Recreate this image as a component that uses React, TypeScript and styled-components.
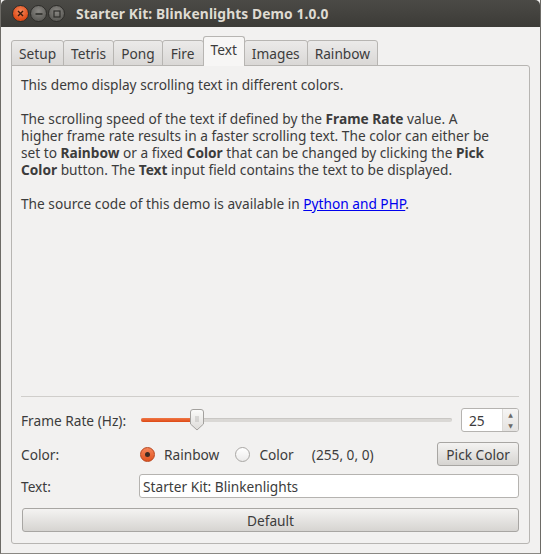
import React, { useState } from "react";
import styled, { createGlobalStyle } from "styled-components";

const GlobalStyle = createGlobalStyle`
  html, body {
    margin: 0;
    padding: 0;
    background: #f2f1f0;
  }
  body {
    font-family: "Noto Sans", "DejaVu Sans", sans-serif;
    font-size: 13.7px;
    color: #3c3c3c;
  }
`;

const Window = styled.div`
  width: 541px;
  height: 554px;
  display: flex;
  flex-direction: column;
  background: #f2f1f0;
  box-sizing: border-box;
  border-left: 1px solid #6d6b66;
  border-right: 1px solid #6d6b66;
  border-bottom: 1px solid #8a8883;
  overflow: hidden;
`;

const TitleBar = styled.div`
  height: 27px;
  flex: none;
  display: flex;
  align-items: center;
  padding-left: 11px;
  background: linear-gradient(#4b4a46, #3c3b37);
  border-radius: 5px 5px 0 0;
`;

const WinButton = styled.div<{ $kind: "close" | "min" | "max" }>`
  width: 17px;
  height: 17px;
  border-radius: 50%;
  margin-right: 1px;
  display: flex;
  align-items: center;
  justify-content: center;
  box-sizing: border-box;
  border: 1px solid #2e2d2a;
  background: ${({ $kind }) =>
    $kind === "close"
      ? "radial-gradient(circle at 50% 35%, #f58a5e, #df4a16 70%)"
      : "radial-gradient(circle at 50% 35%, #8a8884, #5f5e5a 70%)"};
`;

const Title = styled.div`
  margin-left: 10px;
  font-weight: bold;
  font-size: 13.8px;
  color: #dfdbd2;
  letter-spacing: 0.1px;
`;

const Body = styled.div`
  flex: 1;
  display: flex;
  flex-direction: column;
  padding: 10px 10px 9px 10px;
  min-height: 0;
`;

const TabBar = styled.div`
  display: flex;
  align-items: flex-end;
  height: 29px;
  position: relative;
  z-index: 1;
  margin-bottom: -1px;
`;

const Tab = styled.div<{ $active?: boolean }>`
  box-sizing: border-box;
  min-width: 42px;
  height: ${({ $active }) => ($active ? "30px" : "26px")};
  padding: 0 7px;
  display: flex;
  align-items: center;
  justify-content: center;
  color: #3c3c3c;
  border: 1px solid #b7b5b2;
  border-bottom: ${({ $active }) => ($active ? "none" : "1px solid #b7b5b2")};
  border-radius: 3px 3px 0 0;
  margin-right: -1px;
  background: ${({ $active }) =>
    $active ? "#f7f6f5" : "linear-gradient(#ebeae9, #dad8d6)"};
  padding-bottom: ${({ $active }) => ($active ? "4px" : "0")};
`;

const Pane = styled.div`
  flex: 1;
  display: flex;
  flex-direction: column;
  border: 1px solid #b7b5b2;
  border-radius: 0 3px 3px 3px;
  background: #f2f1f0;
  padding: 10px 10px 11px 9px;
  min-height: 0;
`;

const Description = styled.div`
  flex: 1;
  line-height: 17px;
  p {
    margin: 0 0 17px 0;
  }
  b {
    font-weight: bold;
  }
  a {
    color: #0000ee;
    text-decoration: underline;
  }
`;

const Separator = styled.div`
  height: 1px;
  background: #d0cecb;
  margin-bottom: 11px;
`;

const Row = styled.div<{ $gap: number }>`
  display: flex;
  align-items: center;
  margin-bottom: ${({ $gap }) => $gap}px;
`;

const Label = styled.div`
  width: 118px;
  flex: none;
`;

const SliderWrap = styled.div`
  flex: 1;
  height: 24px;
  position: relative;
  margin: 0 9px 0 2px;
  display: flex;
  align-items: center;
`;

const Track = styled.div`
  height: 4px;
  width: 100%;
  border-radius: 2px;
  background: #dad8d5;
  box-shadow: inset 0 1px 0 #c9c7c4;
`;

const Fill = styled.div`
  position: absolute;
  left: 0;
  top: 10px;
  height: 4px;
  border-radius: 2px;
  background: linear-gradient(#f07746, #dd4814);
`;

const Handle = styled.svg`
  position: absolute;
  top: 1px;
`;

const SpinBox = styled.div`
  width: 58px;
  height: 24px;
  box-sizing: border-box;
  border: 1px solid #b5b3b0;
  border-radius: 3px;
  background: #fff;
  display: flex;
  flex: none;
`;

const SpinValue = styled.div`
  flex: 1;
  padding-left: 7px;
  display: flex;
  align-items: center;
`;

const SpinArrows = styled.div`
  width: 15px;
  border-left: 1px solid #dddbd8;
  background: linear-gradient(#f6f5f4, #e4e2e0);
  display: flex;
  flex-direction: column;
  align-items: center;
  justify-content: space-around;
  font-size: 6px;
  color: #6a6966;
  border-radius: 0 2px 2px 0;
`;

const Radio = styled.div<{ $checked?: boolean }>`
  width: 15px;
  height: 15px;
  border-radius: 50%;
  box-sizing: border-box;
  display: flex;
  align-items: center;
  justify-content: center;
  border: 1px solid ${({ $checked }) => ($checked ? "#b8451c" : "#a9a7a4")};
  background: ${({ $checked }) =>
    $checked ? "linear-gradient(#f5855a, #e0531f)" : "linear-gradient(#ffffff, #ecebea)"};
  &::after {
    content: "";
    display: ${({ $checked }) => ($checked ? "block" : "none")};
    width: 5px;
    height: 5px;
    border-radius: 50%;
    background: #3c2a22;
  }
`;

const RadioOption = styled.div<{ $first?: boolean }>`
  display: flex;
  align-items: center;
  gap: 9px;
  margin-right: 16px;
  margin-left: ${({ $first }) => ($first ? "1px" : "0")};
`;

const ColorValue = styled.div`
  flex: 1;
  margin-left: 2px;
`;

const Button = styled.div<{ $wide?: boolean }>`
  height: 24px;
  box-sizing: border-box;
  border: 1px solid #a8a6a3;
  border-radius: 3px;
  background: linear-gradient(#f4f3f2, #d6d4d1);
  display: flex;
  align-items: center;
  justify-content: center;
  padding: 0 8px;
  ${({ $wide }) => ($wide ? "flex: 1; margin-left: 1px;" : "")}
`;

const TextInput = styled.input`
  flex: 1;
  height: 24px;
  box-sizing: border-box;
  border: 1px solid #b5b3b0;
  border-radius: 3px;
  background: #fff;
  font: inherit;
  color: #3c3c3c;
  padding: 0 3px;
  outline: none;
`;

const tabs = ["Setup", "Tetris", "Pong", "Fire", "Text", "Images", "Rainbow"];

export default function App() {
  const [text, setText] = useState("Starter Kit: Blinkenlights");
  const rate = 25;
  const handleX = 56;

  return (
    <>
      <GlobalStyle />
      <Window>
        <TitleBar>
          <WinButton $kind="close">
            <svg width="7" height="7" viewBox="0 0 7 7">
              <path d="M1 1L6 6M6 1L1 6" stroke="#3a1a0c" strokeWidth="1.4" />
            </svg>
          </WinButton>
          <WinButton $kind="min">
            <svg width="8" height="8" viewBox="0 0 8 8">
              <path d="M0.5 4H7.5" stroke="#2e2d2a" strokeWidth="1.6" />
            </svg>
          </WinButton>
          <WinButton $kind="max">
            <svg width="8" height="8" viewBox="0 0 8 8">
              <rect x="1" y="1" width="6" height="6" fill="none" stroke="#2e2d2a" strokeWidth="1.2" />
            </svg>
          </WinButton>
          <Title>Starter Kit: Blinkenlights Demo 1.0.0</Title>
        </TitleBar>
        <Body>
          <TabBar>
            {tabs.map((t) => (
              <Tab key={t} $active={t === "Text"}>
                {t}
              </Tab>
            ))}
          </TabBar>
          <Pane>
            <Description>
              <p>This demo display scrolling text in different colors.</p>
              <p>
                The scrolling speed of the text if defined by the <b>Frame Rate</b> value. A
                <br />
                higher frame rate results in a faster scrolling text. The color can either be
                <br />
                set to <b>Rainbow</b> or a fixed <b>Color</b> that can be changed by clicking the <b>Pick</b>
                <br />
                <b>Color</b> button. The <b>Text</b> input field contains the text to be displayed.
              </p>
              <p>
                The source code of this demo is available in <a href="#">Python and PHP</a>.
              </p>
            </Description>
            <Separator />
            <Row $gap={10}>
              <Label>Frame Rate (Hz):</Label>
              <SliderWrap>
                <Track />
                <Fill style={{ width: handleX }} />
                <Handle width="14" height="22" viewBox="0 0 14 22" style={{ left: handleX - 7 }}>
                  <defs>
                    <linearGradient id="hg" x1="0" y1="0" x2="0" y2="1">
                      <stop offset="0" stopColor="#fbfbfa" />
                      <stop offset="1" stopColor="#dddbd8" />
                    </linearGradient>
                  </defs>
                  <path
                    d="M3 0.5H11Q13.5 0.5 13.5 3V15L7 21L0.5 15V3Q0.5 0.5 3 0.5Z"
                    fill="url(#hg)"
                    stroke="#a3a19e"
                  />
                  <path d="M5 8H9M5 10H9M5 12H9" stroke="#b3b1ae" strokeWidth="0.8" />
                </Handle>
              </SliderWrap>
              <SpinBox>
                <SpinValue>{rate}</SpinValue>
                <SpinArrows>
                  <span>▲</span>
                  <span>▼</span>
                </SpinArrows>
              </SpinBox>
            </Row>
            <Row $gap={8}>
              <Label>Color:</Label>
              <RadioOption $first>
                <Radio $checked />
                <span>Rainbow</span>
              </RadioOption>
              <RadioOption>
                <Radio />
                <span>Color</span>
              </RadioOption>
              <ColorValue>(255, 0, 0)</ColorValue>
              <Button>Pick Color</Button>
            </Row>
            <Row $gap={10}>
              <Label>Text:</Label>
              <TextInput value={text} onChange={(e) => setText(e.target.value)} />
            </Row>
            <Row $gap={0}>
              <Button $wide>Default</Button>
            </Row>
          </Pane>
        </Body>
      </Window>
    </>
  );
}
